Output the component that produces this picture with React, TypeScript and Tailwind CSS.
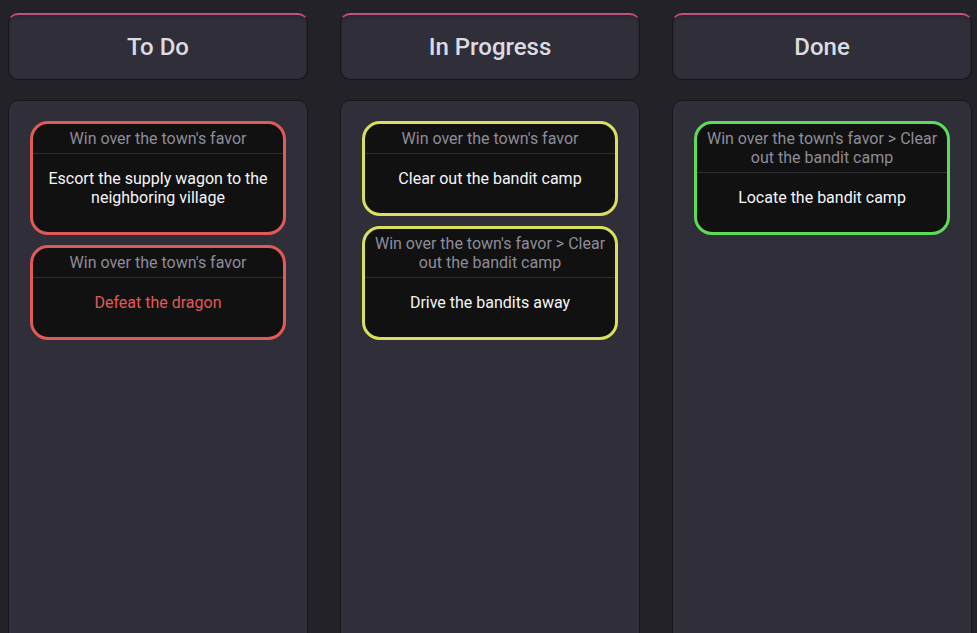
import React from "react";

type Task = { parent: string; title: string; danger?: boolean };
type Col = { name: string; color: string; tasks: Task[] };

const cols: Col[] = [
  {
    name: "To Do",
    color: "border-[#e05a5a]",
    tasks: [
      { parent: "Win over the town's favor", title: "Escort the supply wagon to the neighboring village" },
      { parent: "Win over the town's favor", title: "Defeat the dragon", danger: true },
    ],
  },
  {
    name: "In Progress",
    color: "border-[#dbe05c]",
    tasks: [
      { parent: "Win over the town's favor", title: "Clear out the bandit camp" },
      { parent: "Win over the town's favor > Clear out the bandit camp", title: "Drive the bandits away" },
    ],
  },
  {
    name: "Done",
    color: "border-[#5cdc58]",
    tasks: [
      { parent: "Win over the town's favor > Clear out the bandit camp", title: "Locate the bandit camp" },
    ],
  },
];

export default function App() {
  return (
    <div
      className="w-[977px] h-[633px] overflow-hidden bg-[#232229] flex items-start gap-[32px] pl-[8px] pt-[13px]"
      style={{ fontFamily: "Roboto, 'Liberation Sans', sans-serif" }}
    >
      {cols.map((c) => (
        <div key={c.name} className="w-[300px] shrink-0 flex flex-col gap-[20px]">
          <div className="shrink-0 h-[67px] rounded-[10px] border border-[#16151a] border-t-2 border-t-[#c2507f] bg-[#302f39] flex items-center justify-center shadow-[inset_0_2px_4px_rgba(0,0,0,0.15)]">
            <span className="text-[24px] font-medium text-[#dcdbe2] leading-none">{c.name}</span>
          </div>
          <div className="shrink-0 h-[600px] rounded-[10px] border border-[#17161b] bg-[#302f39] px-[21px] pt-[20px] flex flex-col gap-[10px]">
            {c.tasks.map((t, i) => (
              <div key={i} className={`shrink-0 rounded-[18px] border-[3px] ${c.color} bg-[#111111] overflow-hidden`}>
                <div className="pt-[5px] pb-[5px] px-[8px] text-center text-[16px] leading-[19px] text-[#8e8c99] border-b border-[#2e2d33]">
                  {t.parent}
                </div>
                <div
                  className={`pt-[15px] pb-[25px] px-[8px] text-center text-[16px] leading-[19px] ${
                    t.danger ? "text-[#e05a5a]" : "text-[#f5f5f7]"
                  }`}
                >
                  {t.title}
                </div>
              </div>
            ))}
          </div>
        </div>
      ))}
    </div>
  );
}
